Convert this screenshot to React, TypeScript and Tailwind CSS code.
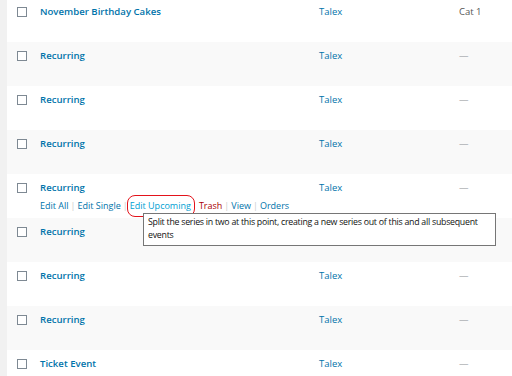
import React from "react";

type Row = {
  title: string;
  author: string;
  cat: string;
  actions?: boolean;
};

const rows: Row[] = [
  { title: "November Birthday Cakes", author: "Talex", cat: "Cat 1" },
  { title: "Recurring", author: "Talex", cat: "—" },
  { title: "Recurring", author: "Talex", cat: "—" },
  { title: "Recurring", author: "Talex", cat: "—" },
  { title: "Recurring", author: "Talex", cat: "—", actions: true },
  { title: "Recurring", author: "", cat: "" },
  { title: "Recurring", author: "Talex", cat: "—" },
  { title: "Recurring", author: "Talex", cat: "—" },
  { title: "Ticket Event", author: "Talex", cat: "—" },
];

function RowActions() {
  const sep = <span className="text-[#ccc] px-[2px]">|</span>;
  return (
    <div className="mt-[6px] flex items-center whitespace-nowrap text-[9px] leading-[12px] text-[#0073aa]">
      <span>Edit All</span>
      {sep}
      <span>Edit Single</span>
      {sep}
      <span className="relative text-[#00a0d2]">
        Edit Upcoming
        {/* hand-drawn highlight */}
        <span className="absolute -left-[3px] -right-[4px] -top-[5px] -bottom-[5px] rounded-[8px] border-[1.5px] border-[#e3131b]" />
      </span>
      <span className="pl-[8px] text-[#a00]">Trash</span>
      {sep}
      <span>View</span>
      {sep}
      <span>Orders</span>
    </div>
  );
}

export default function App() {
  return (
    <div
      className="relative flex w-[512px] h-[376px] overflow-hidden bg-white"
      style={{ fontFamily: '"Open Sans", "Noto Sans", sans-serif' }}
    >
      <div className="w-[7px] shrink-0 bg-[#f1f1f1]" />
      <div className="flex-1 -mt-[2px]">
        {rows.map((row, i) => (
          <div
            key={i}
            className={`flex h-[44px] items-start pt-[8px] ${i % 2 === 1 ? "bg-[#f9f9f9]" : "bg-white"}`}
          >
            <div className="w-[33px] shrink-0 pl-[10px] pt-[1px]">
              <div className="w-[10px] h-[10px] border border-[#7e8993] bg-white" />
            </div>
            <div className="w-[279px] shrink-0">
              <div className="whitespace-nowrap text-[9.6px] leading-[12px] font-semibold text-[#0073aa]">
                {row.title}
              </div>
              {row.actions && <RowActions />}
            </div>
            <div className="w-[140px] shrink-0 text-[9.5px] leading-[12px] text-[#0073aa]">
              {row.author}
            </div>
            <div
              className={`text-[9.5px] leading-[12px] ${row.cat === "—" ? "text-[#8c8f94]" : "text-[#555]"}`}
            >
              {row.cat}
            </div>
          </div>
        ))}
      </div>

      {/* tooltip */}
      <div className="absolute left-[143px] top-[213px] w-[353px] h-[33px] border border-[#767676] bg-white px-[4px] pt-[2px] whitespace-nowrap text-[8.8px] tracking-[-0.26px] leading-[13px] text-[#111]">
        Split the series in two at this point, creating a new series out of this and all subsequent
        <br />
        events
      </div>
    </div>
  );
}
